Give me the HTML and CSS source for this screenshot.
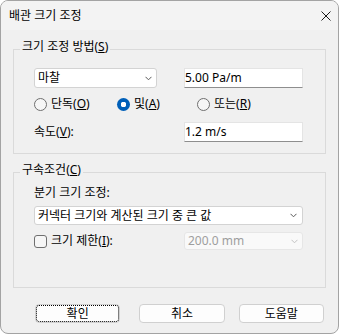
FILE: index.html
```html
<!DOCTYPE html>
<html lang="ko">
<head>
<meta charset="utf-8">
<title>배관 크기 조정</title>
<link rel="stylesheet" href="styles.css">
</head>
<body>
<div class="window">
  <div class="titlebar">
    <span class="title">배관 크기 조정</span>
    <svg class="close" width="10" height="10" viewBox="0 0 10 10"><path d="M0.5 0.5 L9.5 9.5 M9.5 0.5 L0.5 9.5" stroke="#1a1a1a" stroke-width="1" fill="none"/></svg>
  </div>
  <div class="content">
    <fieldset class="group g1">
      <legend>크기 조정 방법(<u>S</u>)</legend>
      <div class="gbody">
        <div class="grid-row">
          <div class="combo small"><span>마찰</span><svg class="chev" width="7" height="5" viewBox="0 0 7 5"><path d="M0.5 0.8 L3.5 3.8 L6.5 0.8" stroke="#5a5a5a" fill="none"/></svg></div>
          <div class="textbox">5.00 Pa/m</div>
        </div>
        <div class="radios">
          <label class="radio r1"><span class="dot"></span><span>단독(<u>O</u>)</span></label>
          <label class="radio r2"><span class="dot on"></span><span>및(<u>A</u>)</span></label>
          <label class="radio r3"><span class="dot"></span><span>또는(<u>R</u>)</span></label>
        </div>
        <div class="grid-row speed">
          <span class="label">속도(<u>V</u>):</span>
          <div class="textbox">1.2 m/s</div>
        </div>
      </div>
    </fieldset>
    <fieldset class="group g2">
      <legend>구속조건(<u>C</u>)</legend>
      <div class="gbody">
        <div class="label branch">분기 크기 조정:</div>
        <div class="combo wide"><span>커넥터 크기와 계산된 크기 중 큰 값</span><svg class="chev" width="7" height="5" viewBox="0 0 7 5"><path d="M0.5 0.8 L3.5 3.8 L6.5 0.8" stroke="#5a5a5a" fill="none"/></svg></div>
        <div class="grid-row limit">
          <label class="check"><span class="box"></span><span>크기 제한(<u>I</u>):</span></label>
          <div class="combo disabled"><span>200.0 mm</span><svg class="chev" width="7" height="5" viewBox="0 0 7 5"><path d="M0.5 0.8 L3.5 3.8 L6.5 0.8" stroke="#c2c2c2" fill="none"/></svg></div>
        </div>
      </div>
    </fieldset>
    <div class="buttons">
      <button class="btn focus">확인</button>
      <button class="btn b2">취소</button>
      <button class="btn">도움말</button>
    </div>
  </div>
</div>
</body>
</html>
```
FILE: styles.css
```css
* { box-sizing: border-box; }
html, body { margin: 0; padding: 0; background: #ffffff; }
body {
  font-family: "Noto Sans", "Noto Sans CJK KR", sans-serif;
  font-size: 12px;
  line-height: 16px;
  color: #000;
}
u { text-decoration: underline; text-underline-offset: 1px; }

.window {
  width: 339px;
  height: 334px;
  border: 1px solid #a3a3a3;
  border-radius: 8px;
  background: #f0f0f0;
  overflow: hidden;
  display: flex;
  flex-direction: column;
}
.titlebar {
  height: 29px;
  flex: none;
  display: flex;
  align-items: center;
  justify-content: space-between;
  padding: 1px 7px 0 8px;
  background: #f3f3f3;
}
.close { display: block; }

.content {
  padding: 9px 0 0 12px;
  display: flex;
  flex-direction: column;
}

.group {
  margin: 0;
  padding: 0;
  width: 313px;
  min-width: 0;
  border: 1px solid #dadada;
}
.group legend {
  margin-left: 6px;
  padding: 0 2px 4px;
  line-height: 16px;
}
.g2 { margin-top: 8px; }
.g1 .gbody { padding: 9px 0 11px 20px; }
.g2 .gbody { padding: 3px 0 37px 20px; }

.grid-row {
  display: grid;
  grid-template-columns: 150px 119px;
  align-items: center;
}

.combo {
  display: flex;
  align-items: center;
  justify-content: space-between;
  background: #ffffff;
  border: 1px solid #d3d3d3;
  border-radius: 3px;
  padding: 0 4px 0 3px;
  white-space: nowrap;
}
.combo.small { width: 123px; height: 20px; }
.combo.wide { width: 269px; height: 19px; margin-top: 5px; padding-right: 5px; }
.combo.disabled {
  width: 119px;
  height: 18px;
  background: #f9f9f9;
  border-color: #e6e6e6;
  color: #9e9e9e;
}
.chev { display: block; flex: none; }

.textbox {
  width: 119px;
  height: 20px;
  background: #ffffff;
  border: 1px solid #e4e4e4;
  border-bottom-color: #8e8e8e;
  padding-left: 0;
  line-height: 18px;
  white-space: nowrap;
}

.radios {
  display: flex;
  height: 16px;
  margin-top: 8px;
  align-items: center;
}
.radio { display: flex; align-items: center; gap: 4px; white-space: nowrap; }
.radio.r1 { width: 83px; }
.radio.r2 { width: 80px; }
.dot {
  width: 13px;
  height: 13px;
  border-radius: 50%;
  border: 1px solid #6f6f6f;
  background: #f6f6f6;
  flex: none;
}
.dot.on {
  border: none;
  background: radial-gradient(circle, #ffffff 0 2.6px, #005fb8 3px);
}

.speed { margin-top: 10px; }

.label.branch { height: 16px; }

.limit { margin-top: 7px; height: 18px; }
.check { display: flex; align-items: center; gap: 4px; white-space: nowrap; }
.box {
  width: 13px;
  height: 13px;
  border: 1px solid #6f6f6f;
  border-radius: 3px;
  background: #f6f6f6;
  flex: none;
}

.buttons {
  display: flex;
  margin-top: 16px;
  padding-left: 22px;
}
.btn {
  width: 86px;
  height: 19px;
  padding: 0;
  margin: 0 14px 0 0;
  font-family: "Noto Sans", "Noto Sans CJK KR", sans-serif;
  font-size: 12px;
  line-height: 16px;
  color: #000;
  background: #fdfdfd;
  border: 1px solid #d0d0d0;
  border-radius: 4px;
}
.btn.focus {
  margin-right: 19px;
  outline: 1px dotted #000;
  outline-offset: -2px;
}
```
